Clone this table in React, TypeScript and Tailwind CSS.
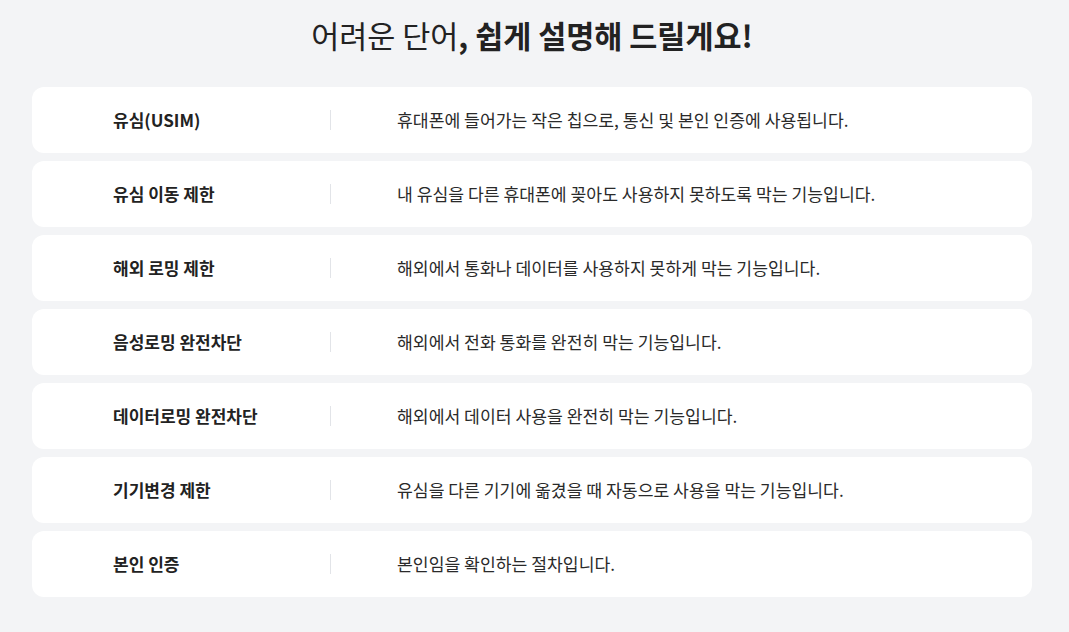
const terms = [
  { term: "유심(USIM)", desc: "휴대폰에 들어가는 작은 칩으로, 통신 및 본인 인증에 사용됩니다." },
  { term: "유심 이동 제한", desc: "내 유심을 다른 휴대폰에 꽂아도 사용하지 못하도록 막는 기능입니다." },
  { term: "해외 로밍 제한", desc: "해외에서 통화나 데이터를 사용하지 못하게 막는 기능입니다." },
  { term: "음성로밍 완전차단", desc: "해외에서 전화 통화를 완전히 막는 기능입니다." },
  { term: "데이터로밍 완전차단", desc: "해외에서 데이터 사용을 완전히 막는 기능입니다." },
  { term: "기기변경 제한", desc: "유심을 다른 기기에 옮겼을 때 자동으로 사용을 막는 기능입니다." },
  { term: "본인 인증", desc: "본인임을 확인하는 절차입니다." },
]

export default function App() {
  return (
    <div
      className="min-h-[632px] bg-[#f3f4f6] text-[#222222]"
      style={{ fontFamily: '"Noto Sans CJK KR", "Noto Sans", sans-serif' }}
    >
      <div className="ml-8 w-[1000px] pt-[11px]">
        <h2 className="text-center text-[30.5px] leading-[48px] text-[#222222]">
          <span className="font-normal">어려운 단어</span>
          <span className="font-bold">, 쉽게 설명해 드릴게요!</span>
        </h2>

        <div className="mt-[28px] flex flex-col gap-2">
          {terms.map((t) => (
            <div key={t.term} className="flex h-[66px] items-center rounded-xl bg-white">
              <div className="w-[298px] pl-[81px] text-[17px] font-bold">{t.term}</div>
              <div className="h-5 w-px bg-[#e2e4e8]" />
              <div className="pl-[66px] text-[17.2px] text-[#2a2a2a]">{t.desc}</div>
            </div>
          ))}
        </div>
      </div>
    </div>
  )
}
